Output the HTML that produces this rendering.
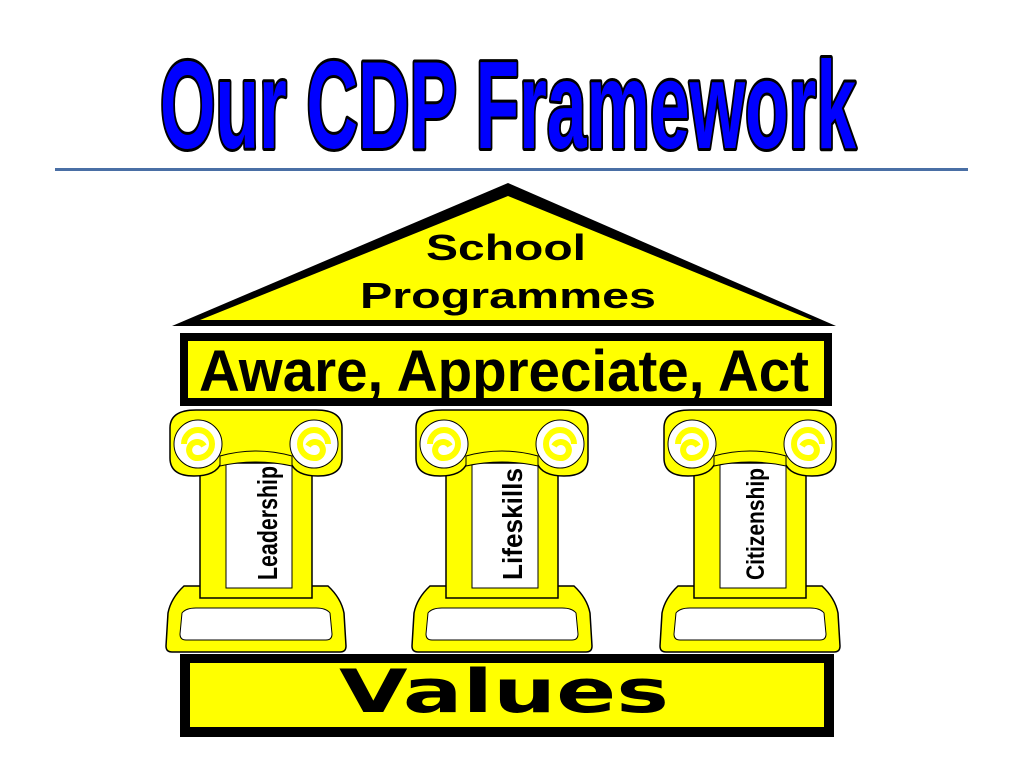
<!DOCTYPE html>
<html><head><meta charset="utf-8"><style>
html,body{margin:0;padding:0;background:#fff;}
svg{display:block}
</style></head><body>
<svg width="1024" height="768" viewBox="0 0 1024 768" xmlns="http://www.w3.org/2000/svg">
<defs>
<g id="col">
  <path d="M-72,178 Q-85,190 -88,205 L-90,238 Q-90,244 -84,244 L84,244 Q90,244 90,238 L88,205 Q85,190 72,178 Z" fill="#ffff00" stroke="#000" stroke-width="1.5"/>
  <path d="M-74,205 Q-70,200 -60,200 L60,200 Q70,200 74,205 L76,226 Q76,232 70,232 L-70,232 Q-76,232 -76,226 Z" fill="#fff" stroke="#000" stroke-width="1"/>
  <rect x="-56" y="40" width="112" height="150" fill="#ffff00" stroke="#000" stroke-width="1.5"/>
  <rect x="-30" y="48" width="66" height="132" fill="#fff" stroke="#000" stroke-width="1"/>
  <path d="M-86,20 Q-86,2 -60,2 L60,2 Q86,2 86,20 L86,50 Q86,68 62,68 Q40,68 35,55 L-35,55 Q-40,68 -62,68 Q-86,68 -86,50 Z" fill="#ffff00" stroke="#000" stroke-width="1.5"/>
  <circle cx="-58" cy="36" r="24" fill="#fff" stroke="#000" stroke-width="1"/>
  <circle cx="58" cy="36" r="24" fill="#fff" stroke="#000" stroke-width="1"/>
  <path d="M-58,36 m-14,0 a14,14 0 1,1 14,14 a8,8 0 1,1 6,-12" fill="none" stroke="#ffff00" stroke-width="6"/>
  <path d="M58,36 m14,0 a14,14 0 1,0 -14,14 a8,8 0 1,0 -6,-12" fill="none" stroke="#ffff00" stroke-width="6"/>
  <path d="M-36,48 Q0,38 36,48 L36,58 Q0,50 -36,58 Z" fill="#ffff00" stroke="#000" stroke-width="1"/>
</g>
</defs>
<text x="508" y="148" text-anchor="middle" font-family="Liberation Sans Narrow, Liberation Sans, sans-serif" font-weight="bold" font-size="124" textLength="696" lengthAdjust="spacingAndGlyphs" fill="#0000ff" stroke="#000" stroke-width="6" stroke-linejoin="round" paint-order="stroke">Our CDP Framework</text>
<rect x="55" y="168" width="913" height="3" fill="#4a6fa5"/>
<polygon points="508,183 172,326 836,326" fill="#000"/>
<polygon points="508,196 200,320 812,320" fill="#ffff00"/>
<text x="506" y="260" text-anchor="middle" font-family="Liberation Sans, sans-serif" font-weight="bold" font-size="36" textLength="160" lengthAdjust="spacingAndGlyphs">School</text>
<text x="508" y="308" text-anchor="middle" font-family="Liberation Sans, sans-serif" font-weight="bold" font-size="36" textLength="296" lengthAdjust="spacingAndGlyphs">Programmes</text>
<rect x="180" y="333" width="652" height="73" fill="#000"/>
<rect x="188" y="341" width="636" height="57" fill="#ffff00"/>
<text x="504" y="391" text-anchor="middle" font-family="Liberation Sans Narrow, Liberation Sans, sans-serif" font-weight="bold" font-size="58" textLength="610" lengthAdjust="spacingAndGlyphs">Aware, Appreciate, Act</text>
<use href="#col" transform="translate(256,408)"/>
<use href="#col" transform="translate(502,408)"/>
<use href="#col" transform="translate(750,408)"/>
<text transform="translate(277,580) rotate(-90)" font-family="Liberation Sans Narrow, Liberation Sans, sans-serif" font-weight="bold" font-size="28" textLength="114" lengthAdjust="spacingAndGlyphs">Leadership</text>
<text transform="translate(522,580) rotate(-90)" font-family="Liberation Sans Narrow, Liberation Sans, sans-serif" font-weight="bold" font-size="28" textLength="112" lengthAdjust="spacingAndGlyphs">Lifeskills</text>
<text transform="translate(764,580) rotate(-90)" font-family="Liberation Sans Narrow, Liberation Sans, sans-serif" font-weight="bold" font-size="25" textLength="112" lengthAdjust="spacingAndGlyphs">Citizenship</text>
<rect x="180" y="654" width="654" height="83" fill="#000"/>
<rect x="190" y="663" width="634" height="64" fill="#ffff00"/>
<text x="504" y="712" text-anchor="middle" font-family="DejaVu Sans, Liberation Sans, sans-serif" font-weight="bold" font-size="60" textLength="330" lengthAdjust="spacingAndGlyphs">Values</text>
</svg>
</body></html>
